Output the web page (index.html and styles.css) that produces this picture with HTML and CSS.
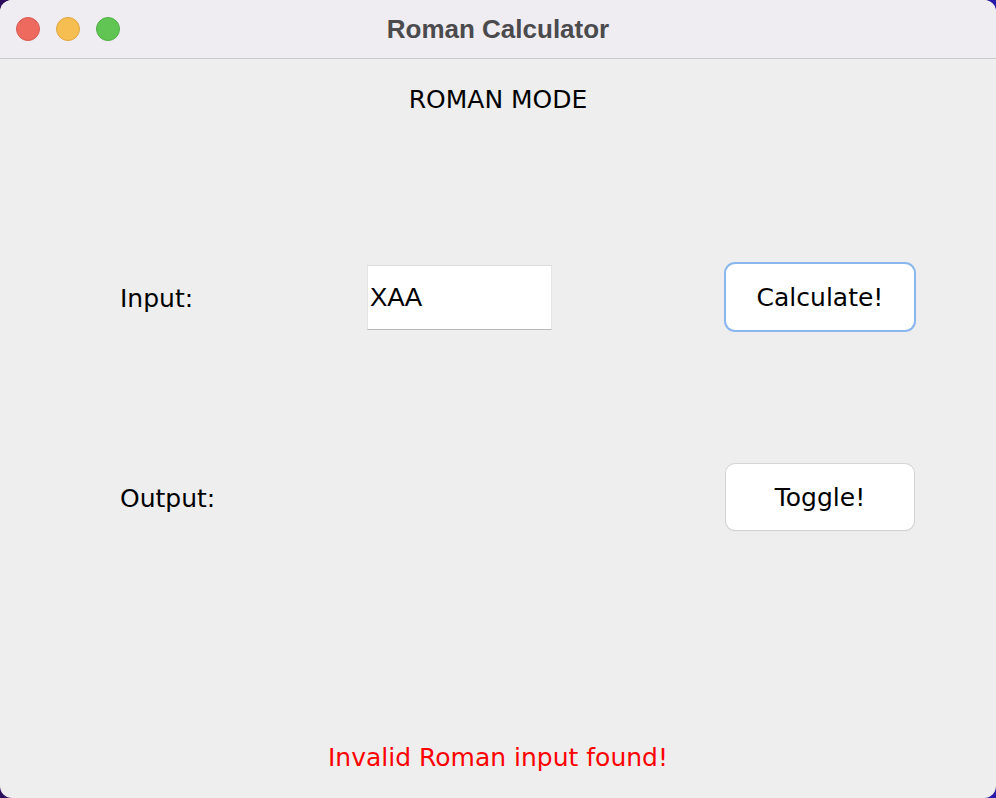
FILE: index.html
```html
<!DOCTYPE html>
<html>
<head>
<meta charset="utf-8">
<title>Roman Calculator</title>
<link rel="stylesheet" href="styles.css">
</head>
<body>
<div class="window">
  <div class="titlebar">
    <div class="lights">
      <span class="light red"></span>
      <span class="light yellow"></span>
      <span class="light green"></span>
    </div>
    <div class="title">Roman Calculator</div>
  </div>
  <div class="content">
    <div class="mode">ROMAN MODE</div>
    <div class="form">
      <div class="label">Input:</div>
      <div class="field">XAA</div>
      <div></div>
      <button class="btn focused">Calculate!</button>
      <div class="label">Output:</div>
      <div></div>
      <div></div>
      <button class="btn">Toggle!</button>
    </div>
    <div class="error">Invalid Roman input found!</div>
  </div>
</div>
</body>
</html>
```
FILE: styles.css
```css
html, body {
  margin: 0;
  padding: 0;
  width: 996px;
  height: 798px;
  overflow: hidden;
}
body {
  background: linear-gradient(90deg, #2b0f5e 0%, #3a1470 50%, #2a1aa8 100%);
  font-family: "DejaVu Sans", "Noto Sans", sans-serif;
}
.window {
  width: 996px;
  height: 798px;
  border-radius: 12px;
  overflow: hidden;
  background: #eeeeee;
  display: flex;
  flex-direction: column;
}
.titlebar {
  height: 58px;
  flex: none;
  background: #efedf1;
  border-bottom: 1px solid #c9c8cc;
  display: flex;
  align-items: center;
  position: relative;
}
.lights {
  display: flex;
  gap: 16px;
  padding-left: 16px;
}
.light {
  width: 24px;
  height: 24px;
  border-radius: 50%;
  box-sizing: border-box;
}
.red { background: #ee6a5f; border: 1px solid #d85a50; }
.yellow { background: #f6be50; border: 1px solid #dfa53f; }
.green { background: #61c554; border: 1px solid #52ad46; }
.title {
  position: absolute;
  left: 0;
  right: 0;
  top: 0;
  height: 58px;
  line-height: 58px;
  text-align: center;
  font-family: "Liberation Sans", Arial, sans-serif;
  font-weight: bold;
  font-size: 26px;
  color: #4b4a4d;
}
.content {
  flex: 1;
  display: flex;
  flex-direction: column;
  align-items: stretch;
}
.mode {
  text-align: center;
  font-size: 25px;
  margin-top: 26px;
  height: 30px;
  line-height: 30px;
  color: #000;
}
.form {
  display: grid;
  grid-template-columns: 247px 185px 173px 190px;
  grid-template-rows: 68px 68px;
  row-gap: 132px;
  padding-left: 120px;
  margin-top: 148px;
  align-items: center;
}
.label {
  font-size: 25px;
  color: #000;
  padding-top: 3px;
}
.field {
  height: 65px;
  background: #fff;
  border-top: 1px solid #dcdcdc;
  border-bottom: 1px solid #b9b9b9;
  border-left: 1px solid #e4e4e4;
  border-right: 1px solid #e4e4e4;
  box-sizing: border-box;
  font-family: "Liberation Sans", Arial, sans-serif;
  font-size: 26px;
  line-height: 63px;
  padding-left: 2px;
  color: #000;
}
.btn {
  height: 66px;
  width: 188px;
  margin-left: 1px;
  background: #fff;
  border: none;
  border-radius: 9px;
  box-shadow: 0 0 0 1px #d4d4d4, 0 1px 1px rgba(0,0,0,0.15);
  font-family: "DejaVu Sans", sans-serif;
  font-size: 25px;
  color: #000;
  padding: 0;
}
.btn.focused {
  box-shadow: 0 0 0 2px #8ab8ee;
}
.error {
  margin-top: auto;
  margin-bottom: 26px;
  text-align: center;
  color: #ff0000;
  font-size: 25px;
}
```
